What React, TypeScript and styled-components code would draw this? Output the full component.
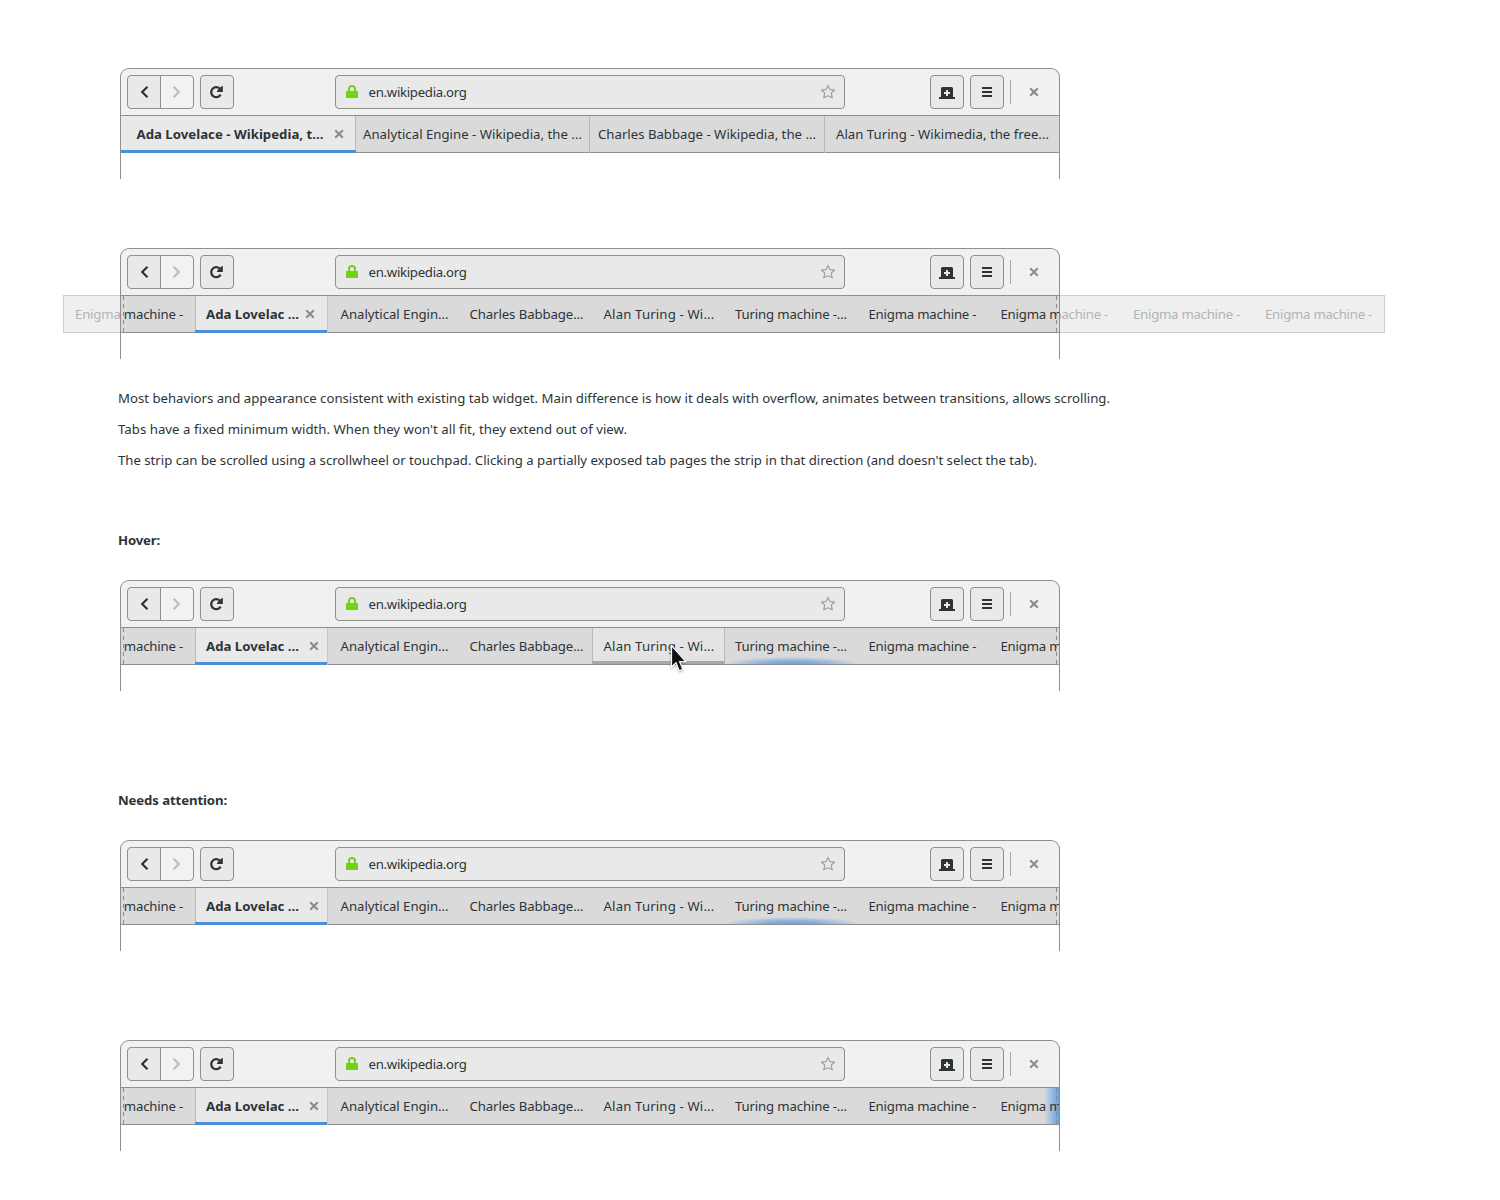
import React, { useLayoutEffect, useRef } from "react";
import styled, { createGlobalStyle, css } from "styled-components";

const ink = "#2e3436";
const line = "#8f8f8f";

const GlobalStyle = createGlobalStyle`
  * { box-sizing: border-box; }
  body {
    margin: 0;
    background: #fff;
    color: ${ink};
    font: 13.2px/20px "Noto Sans", "Open Sans", sans-serif;
  }
`;

const Page = styled.main`
  display: flex;
  flex-direction: column;
  width: 1500px;
  height: 1200px;
  padding-top: 68px;
  overflow: hidden;
`;

const Section = styled.section<{ $gap: number }>`
  display: flex;
  flex-direction: column;
  margin-bottom: ${(p) => p.$gap}px;
`;

const Line = styled.span<{ $bold?: boolean }>`
  display: block;
  flex: none;
  white-space: nowrap;
  font-weight: ${(p) => (p.$bold ? 700 : 400)};
`;

/* Single line of text, tracked so that it spans the given width. */
function Label({ children, width, bold }: { children: string; width: number; bold?: boolean }) {
  const ref = useRef<HTMLSpanElement>(null);
  useLayoutEffect(() => {
    const el = ref.current;
    if (!el) return;
    el.style.letterSpacing = "0px";
    el.style.width = "max-content";
    const natural = el.getBoundingClientRect().width;
    el.style.letterSpacing = `${(width - natural) / children.length}px`;
    el.style.width = `${width}px`;
  }, [children, width]);
  return (
    <Line ref={ref} $bold={bold}>
      {children}
    </Line>
  );
}

const Frame = styled.div`
  position: relative;
  display: flex;
  flex-direction: column;
  width: 940px;
  height: 111px;
  margin-left: 120px;
`;

/* Outline drawn above the tab strip, so overflowing tabs pass beneath it. */
const Outline = styled.div`
  position: absolute;
  inset: 0;
  border: 1px solid ${line};
  border-bottom: 0;
  border-radius: 9px 9px 0 0;
  pointer-events: none;
`;

const Header = styled.header`
  display: flex;
  align-items: center;
  height: 48px;
  padding: 0 6px 0 7px;
  background: #f1f1f1;
  border-bottom: 1px solid ${line};
  border-radius: 9px 9px 0 0;
`;

const Button = styled.button<{ $side?: "left" | "right" }>`
  display: grid;
  place-items: center;
  flex: none;
  width: 34px;
  height: 34px;
  padding: 0;
  border: 1px solid ${line};
  border-radius: 4px;
  background: #e9e9e9;
  color: ${ink};
  ${(p) => p.$side === "left" && css`border-radius: 4px 0 0 4px;`}
  ${(p) =>
    p.$side === "right" &&
    css`
      margin-left: -1px;
      border-radius: 0 4px 4px 0;
      background: #f2f2f2;
      color: #bdbfbf;
    `}
`;

const ReloadSlot = styled.div`
  display: flex;
  margin-left: 6px;
`;

const Address = styled.div`
  display: flex;
  align-items: center;
  width: 510px;
  height: 34px;
  margin-left: 101px;
  padding: 0 8px 0 8px;
  border: 1px solid ${line};
  border-radius: 4px;
  background: #e9e9e9;
`;

const Host = styled.div`
  flex: 1;
  margin-left: 8.6px;
`;

const Actions = styled.div`
  display: flex;
  align-items: center;
  gap: 6px;
  margin-left: 85px;
`;

const Separator = styled.div`
  width: 1px;
  height: 24px;
  background: #a9a9a9;
`;

const CloseSlot = styled.div`
  display: flex;
  margin-left: 9px;
`;

const Icon = styled.svg`
  display: block;
  flex: none;
`;

const StripView = styled.div<{ $clip: boolean }>`
  position: relative;
  display: flex;
  width: 940px;
  height: 37px;
  background: #dadada;
  overflow: ${(p) => (p.$clip ? "hidden" : "visible")};
  box-shadow: inset 0 -1px 0 ${line};
`;

const selectedMark = css`
  position: relative;
  background: #e9e9e9;
  &::after {
    content: "";
    position: absolute;
    left: 0;
    bottom: 0;
    height: 3px;
    background: #4a90d9;
  }
`;

const WideTabs = styled.div`
  display: grid;
  grid-template-columns: 235px 234px 235px 236px;
`;

const WideTab = styled.div<{ $active?: boolean }>`
  display: flex;
  align-items: center;
  justify-content: center;
  gap: 7px;
  height: 37px;
  border-left: 1px solid #b9b9b9;
  padding-bottom: 1px;
  ${(p) =>
    p.$active &&
    css`
      ${selectedMark}
      border-left: 0;
      padding-left: 8px;
      &::after { right: -1px; }
    `}
`;

const TabRow = styled.div`
  position: relative;
  display: flex;
  flex: none;
  margin-left: -57px;
`;

const Tab = styled.div<{ $mode?: "active" | "hover"; $pad: number }>`
  display: flex;
  align-items: center;
  flex: none;
  width: 132px;
  height: 37px;
  padding: 0 0 1px ${(p) => p.$pad}px;
  ${(p) =>
    p.$mode === "active" &&
    css`
      ${selectedMark}
      padding-left: ${p.$pad - 1}px;
      border-left: 1px solid #b9b9b9;
      box-shadow: 1px 0 0 #c4c4c4;
      &::after { left: -1px; right: 0; }
    `}
  ${(p) =>
    p.$mode === "hover" &&
    css`
      height: 36px;
      margin: 0 -1px 0 1px;
      padding: 3px 0 3px ${p.$pad - 2}px;
      padding-bottom: 0;
      border-left: 1px solid #b9b9b9;
      border-bottom: 3px solid #a8a8a8;
      background: #e4e4e4;
      box-shadow: 1px 0 0 #b9b9b9;
    `}
`;

const CloseGap = styled.div<{ $w: number }>`
  margin-left: ${(p) => p.$w}px;
`;

const Glow = styled.div`
  position: absolute;
  left: 604px;
  bottom: 1px;
  width: 136px;
  height: 7px;
  background: radial-gradient(ellipse 68px 7px at 50% 100%, #6fa3dc 0%, #83aedd 40%, #b4c7dc 75%, transparent 100%);
`;

const EdgeGlow = styled.div`
  position: absolute;
  right: 0;
  top: 0;
  width: 16px;
  height: 36px;
  background: linear-gradient(90deg, transparent, #a5c2e2 40%, #5e9bdd);
`;

const EdgeMark = styled.div<{ $x: number }>`
  position: absolute;
  left: ${(p) => p.$x}px;
  top: 0;
  width: 1px;
  height: 36px;
  background: repeating-linear-gradient(180deg, #8f8f8f 0 4px, transparent 4px 8px);
`;

/* Washed-out part of the strip that lies beyond the window edge. */
const Veil = styled.div<{ $side: "left" | "right" }>`
  position: absolute;
  top: -1px;
  height: 38px;
  overflow: hidden;
  border: 1px solid #cfcfcf;
  background: #efefef;
  color: #b2b4b4;
  display: flex;
  align-items: center;
  ${(p) =>
    p.$side === "left"
      ? css`left: -57px; width: 57px; border-right: 0; padding-left: 11px;`
      : css`left: 940px; width: 325px; border-left: 0;`}
`;

const VeilShift = styled.div`
  display: flex;
  flex: none;
  gap: 25px;
  margin-left: -59px;
`;

const Cursor = styled.svg`
  position: absolute;
  left: 549px;
  top: 62px;
  z-index: 2;
  filter: drop-shadow(0.5px 1px 1px rgba(0, 0, 0, 0.35));
`;

const Notes = styled.div`
  display: flex;
  flex-direction: column;
  gap: 11px;
  padding-left: 118px;
  margin: 29px 0 60px;
`;

const Heading = styled.h2`
  display: flex;
  margin: 0 0 30px 118px;
  font-size: 13.2px;
`;

const Chevron = ({ flip }: { flip?: boolean }) => (
  <Icon width="16" height="16" viewBox="0 0 16 16" fill="none" stroke="currentColor" strokeWidth="2.2">
    <path d={flip ? "M4.6 2.7 9.8 8 4.6 13.3" : "M11.5 2.7 6.2 8 11.5 13.3"} />
  </Icon>
);

const Reload = () => (
  <Icon width="16" height="16" viewBox="0 0 16 16">
    <path d="M11.6 10.6A5 5 0 1 1 10.6 4.5" fill="none" stroke="currentColor" strokeWidth="2.2" />
    <path d="M13.800 2V8H7.900V7.100L12.200 2.600Z" fill="currentColor" />
  </Icon>
);

const Lock = () => (
  <Icon width="16" height="16" viewBox="0 0 16 16">
    <path d="M5 8V5a3 3 0 0 1 6 0V8" fill="none" stroke="#73d216" strokeWidth="2" />
    <rect x="2" y="7" width="12" height="7" rx=".6" fill="#73d216" />
  </Icon>
);

const Star = () => (
  <Icon width="16" height="16" viewBox="0 0 16 16" fill="none" stroke="#9a9c9c" strokeWidth="1.1" strokeLinejoin="round">
    <path d="M8 1.4 9.900 5.600 14.600 6 11.200 9.100 12.300 13.800 8 11.800 3.700 13.800 4.800 9.100 1.400 6 6.100 5.600Z" />
  </Icon>
);

const NewTab = () => (
  <Icon width="16" height="16" viewBox="0 0 16 16">
    <path
      fill="currentColor"
      fillRule="evenodd"
      d="M2 13V4.500Q2 3 3.500 3h9Q14 3 14 4.500V13h2v2H0v-2ZM7 6v2H5v2h2v2h2v-2h2V8H9V6Z"
    />
  </Icon>
);

const Menu = () => (
  <Icon width="16" height="16" viewBox="0 0 16 16" fill="currentColor">
    <path d="M3 3h10v2H3ZM3 7h10v2H3ZM3 11h10v2H3Z" />
  </Icon>
);

const Close = () => (
  <Icon width="16" height="16" viewBox="0 0 16 16" stroke="#8d8f8d" strokeWidth="2.2">
    <path d="m4.200 4.200 7.600 7.600m0-7.600-7.600 7.600" />
  </Icon>
);

const Toolbar = () => (
  <Header>
    <Button $side="left"><Chevron /></Button>
    <Button $side="right"><Chevron flip /></Button>
    <ReloadSlot><Button><Reload /></Button></ReloadSlot>
    <Address>
      <Lock />
      <Host><Label width={98}>en.wikipedia.org</Label></Host>
      <Star />
    </Address>
    <Actions>
      <Button><NewTab /></Button>
      <Button><Menu /></Button>
      <Separator />
      <CloseSlot><Close /></CloseSlot>
    </Actions>
  </Header>
);

const tabs = [
  { text: "Enigma machine -", width: 108, pad: 12 },
  { text: "Ada Lovelac ...", width: 93, pad: 11 },
  { text: "Analytical Engin...", width: 108, pad: 13.6 },
  { text: "Charles Babbage...", width: 114, pad: 10.5 },
  { text: "Alan Turing - Wi...", width: 111, pad: 12.5 },
  { text: "Turing machine -...", width: 112, pad: 12 },
  { text: "Enigma machine -", width: 108, pad: 13.4 },
  { text: "Enigma machine -", width: 108, pad: 13.4 },
];

type Kind = "overflow" | "hover" | "attention" | "edge";

const ScrollWindow = ({ kind }: { kind: Kind }) => (
  <Frame>
    <Toolbar />
    <StripView $clip={kind !== "overflow"}>
      {(kind === "hover" || kind === "attention") && <Glow />}
      {kind === "edge" && <EdgeGlow />}
      <TabRow>
        {tabs.map((t, i) => (
          <Tab key={i} $pad={t.pad} $mode={i === 1 ? "active" : i === 4 && kind === "hover" ? "hover" : undefined}>
            <Label width={t.width} bold={i === 1}>{t.text}</Label>
            {i === 1 && <CloseGap $w={kind === "overflow" ? 3 : 7}><Close /></CloseGap>}
          </Tab>
        ))}
      </TabRow>
      <EdgeMark $x={3} />
      <EdgeMark $x={936} />
      {kind === "overflow" && (
        <>
          <Veil $side="left"><Label width={108}>Enigma machine -</Label></Veil>
          <Veil $side="right">
            <VeilShift>
              <Label width={107}>Enigma machine -</Label>
              <Label width={107}>Enigma machine -</Label>
              <Label width={107}>Enigma machine -</Label>
            </VeilShift>
          </Veil>
        </>
      )}
    </StripView>
    <Outline />
    {kind === "hover" && (
      <Cursor width="20" height="32" viewBox="0 0 20 32">
        <path
          d="M2.500 3.500V25L7 20.800 10.200 28.800 13.800 27.300 10.600 19.700H16.800Z"
          fill="#111"
          stroke="#fff"
          strokeWidth="1.2"
        />
      </Cursor>
    )}
  </Frame>
);

const App = () => (
  <>
    <GlobalStyle />
    <Page>
      <Section $gap={69}>
        <Frame>
          <Toolbar />
          <StripView $clip>
            <WideTabs>
              <WideTab $active>
                <Label width={187} bold>Ada Lovelace - Wikipedia, t...</Label>
                <Close />
              </WideTab>
              <WideTab><Label width={219}>Analytical Engine - Wikipedia, the ...</Label></WideTab>
              <WideTab><Label width={218}>Charles Babbage - Wikipedia, the ...</Label></WideTab>
              <WideTab><Label width={213}>Alan Turing - Wikimedia, the free...</Label></WideTab>
            </WideTabs>
          </StripView>
          <Outline />
        </Frame>
      </Section>
      <Section $gap={0}><ScrollWindow kind="overflow" /></Section>
      <Notes>
        <Label width={992}>Most behaviors and appearance consistent with existing tab widget. Main difference is how it deals with overflow, animates between transitions, allows scrolling.</Label>
        <Label width={509}>Tabs have a fixed minimum width. When they won't all fit, they extend out of view.</Label>
        <Label width={919}>The strip can be scrolled using a scrollwheel or touchpad. Clicking a partially exposed tab pages the strip in that direction (and doesn't select the tab).</Label>
      </Notes>
      <Heading><Label width={42} bold>Hover:</Label></Heading>
      <Section $gap={99}><ScrollWindow kind="hover" /></Section>
      <Heading><Label width={109} bold>Needs attention:</Label></Heading>
      <Section $gap={89}><ScrollWindow kind="attention" /></Section>
      <Section $gap={0}><ScrollWindow kind="edge" /></Section>
    </Page>
  </>
);

export default App;
